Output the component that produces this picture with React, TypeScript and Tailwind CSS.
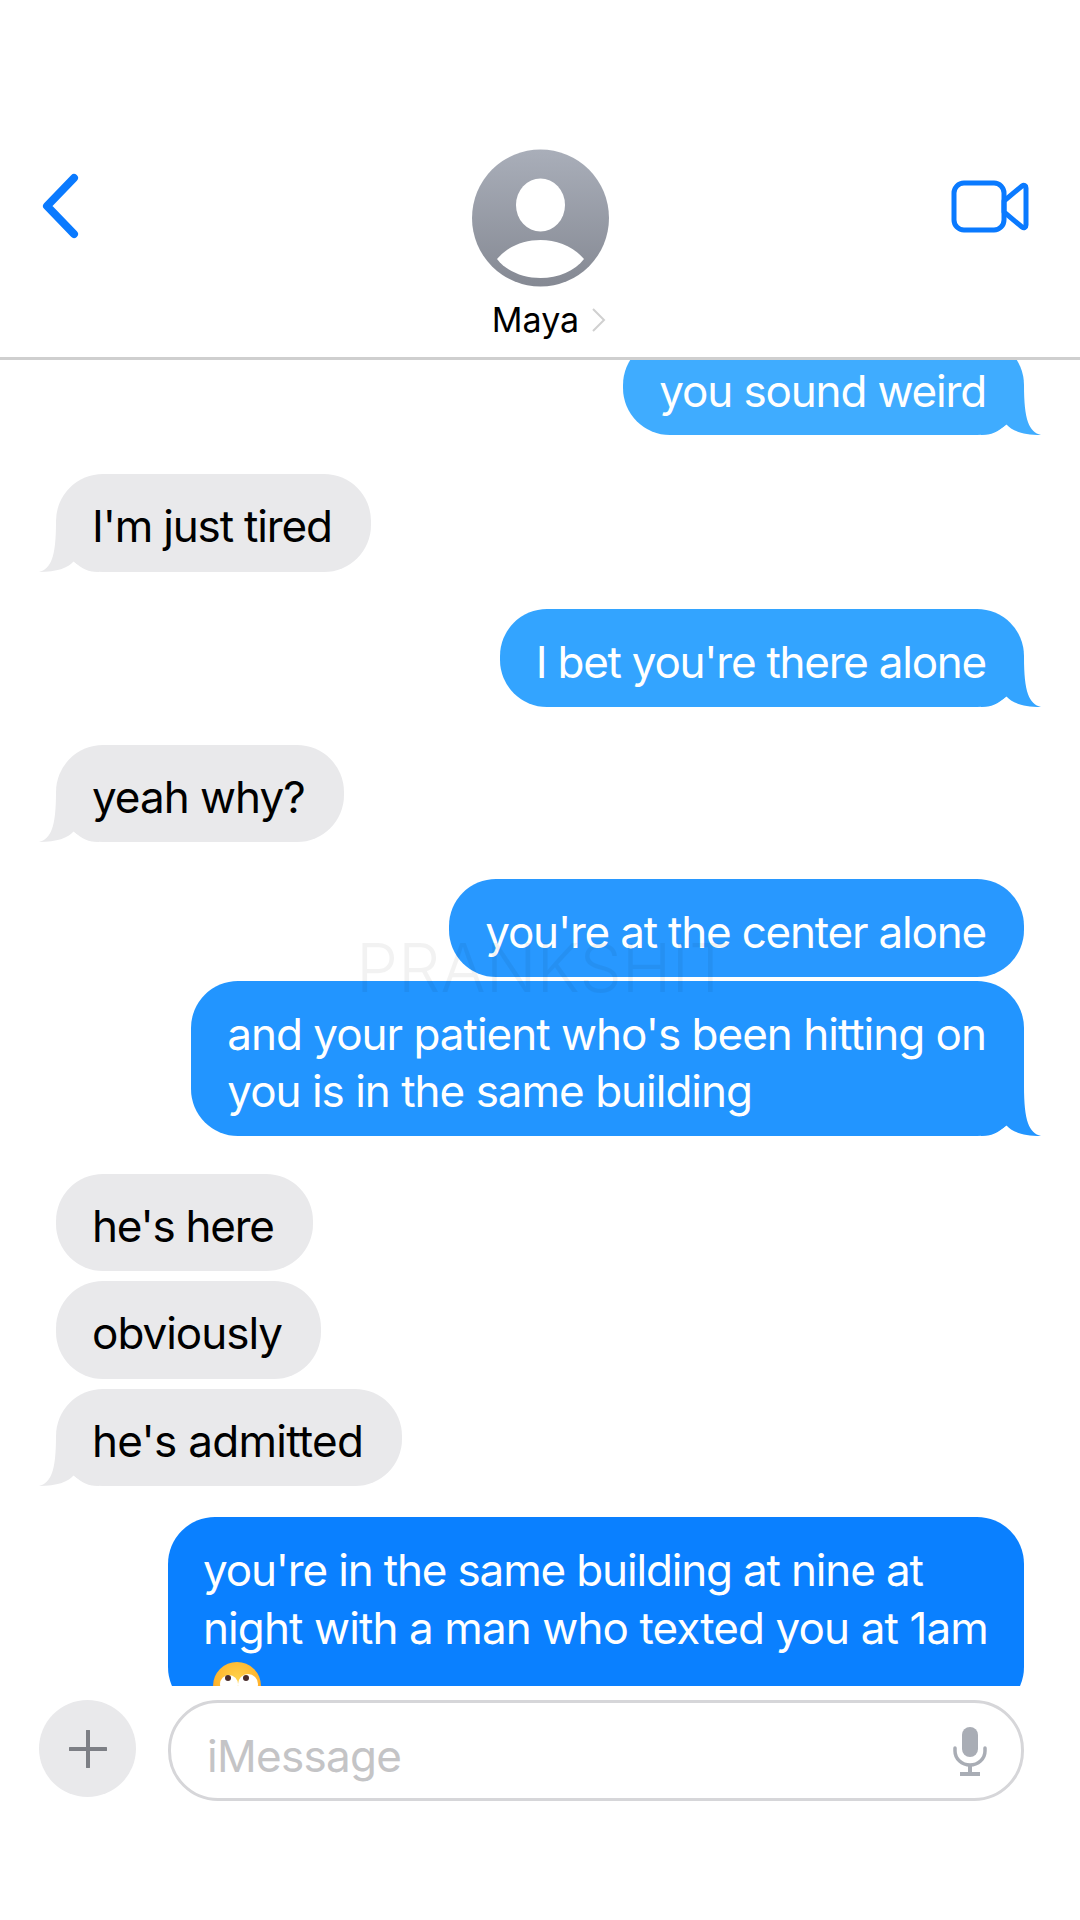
const font = "font-['Inter','Liberation_Sans',sans-serif]";

function Tail({ color, left }: { color: string; left?: boolean }) {
  return (
    <svg
      className={left ? "absolute left-[-17px] bottom-0 -scale-x-100" : "absolute right-[-17px] bottom-0"}
      width="60"
      height="50"
      viewBox="0 0 60 50"
    >
      <path d="M0 50 C10 50 18 47 25 39 C31 46 42 50 60 50 C48 47 43 35 43 0 L0 0 Z" fill={color} />
    </svg>
  );
}

function Sent({ lines, bg, tail, cls = "" }: { lines: string[]; bg: string; tail?: string; cls?: string }) {
  return (
    <div className={`relative self-end rounded-[47px] pl-9 pr-[38px] pt-[25px] pb-[15px] text-white ${bg} ${cls}`}>
      {lines.map((l) => (
        <div key={l} className="relative z-10 whitespace-nowrap">{l}</div>
      ))}
      {tail && <Tail color={tail} />}
    </div>
  );
}

function Recv({ text, tail, cls = "" }: { text: string; tail?: boolean; cls?: string }) {
  return (
    <div className={`relative self-start rounded-[47px] bg-[#e9e9eb] pl-[36px] pr-[39px] pt-6 pb-4 text-black ${cls}`}>
      <div className="relative z-10 whitespace-nowrap">{text}</div>
      {tail && <Tail color="#e9e9eb" left />}
    </div>
  );
}

function Avatar() {
  return (
    <svg width="137" height="138" viewBox="0 0 137 138">
      <defs>
        <linearGradient id="av" x1="0" y1="0" x2="0" y2="1">
          <stop offset="0" stopColor="#a9aeb9" />
          <stop offset="1" stopColor="#858993" />
        </linearGradient>
      </defs>
      <circle cx="68.5" cy="69" r="68.5" fill="url(#av)" />
      <ellipse cx="68.5" cy="56" rx="24.5" ry="26.5" fill="#fff" />
      <path d="M25 110 C36 97 52 91 68.5 91 C85 91 101 97 112 110 C103 122 86 129 68.5 129 C51 129 34 122 25 110 Z" fill="#fff" />
    </svg>
  );
}

function Emoji() {
  return (
    <svg className="absolute left-[45px] top-[145px]" width="48" height="48" viewBox="0 0 48 48">
      <defs>
        <radialGradient id="em" cx="0.5" cy="0.35" r="0.65">
          <stop offset="0" stopColor="#ffd24a" />
          <stop offset="0.7" stopColor="#ffb52e" />
          <stop offset="1" stopColor="#f58a1f" />
        </radialGradient>
      </defs>
      <circle cx="24" cy="24" r="24" fill="url(#em)" />
      <circle cx="16" cy="22" r="9" fill="#fff" />
      <circle cx="35" cy="22" r="10" fill="#fff" />
      <circle cx="15" cy="16" r="3" fill="#4a2c2a" />
      <circle cx="33" cy="16" r="3" fill="#4a2c2a" />
    </svg>
  );
}

export default function App() {
  return (
    <div className={`relative flex h-[1920px] w-[1080px] flex-col overflow-hidden bg-white ${font} text-[44px] leading-[57.5px] tracking-[-1px]`}>
      <header className="relative flex h-[360px] shrink-0 flex-col items-center border-b-[3px] border-[#cfcfcf] pt-[149px]">
        <svg className="absolute left-[38px] top-[170px]" width="46" height="72" viewBox="0 0 46 72" fill="none">
          <path d="M36 8 L9 36 L36 64" stroke="#0a7aff" strokeWidth="8" strokeLinecap="round" strokeLinejoin="round" />
        </svg>
        <svg className="absolute left-[950px] top-[179px]" width="80" height="55" viewBox="0 0 80 55" fill="none" stroke="#0a7aff" strokeWidth="5">
          <rect x="4" y="4" width="50" height="47" rx="10" />
          <path d="M54 22 L72 7 C74 5.500 76 6.500 76 9 L76 46 C76 48.500 74 49.500 72 48 L54 33 Z" strokeLinejoin="round" />
        </svg>
        <Avatar />
        <div className="mt-[11px] flex items-center pr-[7px] text-[34px] leading-[44px] tracking-normal text-black">
          <span>Maya</span>
          <svg className="ml-3 mr-[-26px]" width="16" height="26" viewBox="0 0 16 26" fill="none">
            <path d="M2 2 L13 13 L2 24" stroke="#d0d0d0" strokeWidth="2" />
          </svg>
        </div>
      </header>

      <main className="flex h-[1326px] shrink-0 flex-col overflow-hidden pl-14 pr-14">
        <Sent lines={["you sound weird"]} bg="bg-[#3facff]" tail="#3facff" cls="mt-[-22.5px] tracking-[-1.15px]" />
        <Recv text="I'm just tired" tail cls="mt-[39px] tracking-[-1.17px]" />
        <Sent lines={["I bet you're there alone"]} bg="bg-[#33a4ff]" tail="#33a4ff" cls="mt-[37.5px] tracking-[-1.25px]" />
        <Recv text="yeah why?" tail cls="mt-[38px]" />
        <Sent lines={["you're at the center alone"]} bg="bg-[#2898ff]" cls="mt-[37px] tracking-[-1.2px]" />
        <Sent lines={["and your patient who's been hitting on", "you is in the same building"]} bg="bg-[#2295ff]" tail="#2295ff" cls="mt-1" />
        <Recv text="he's here" cls="mt-[38px] tracking-[-1.25px]" />
        <Recv text="obviously" cls="mt-[10px]" />
        <Recv text="he's admitted" tail cls="mt-[10px] tracking-[-0.72px]" />
        <div className="relative mt-[31px] w-[856px] shrink-0 self-end rounded-[47px] bg-[#0a80ff] pl-[35px] pt-[25px] text-white">
          <div className="whitespace-nowrap tracking-[-1.16px]">you're in the same building at nine at</div>
          <div className="whitespace-nowrap tracking-[-0.9px]">night with a man who texted you at 1am</div>
          <div className="h-[57px]" />
          <Emoji />
        </div>
      </main>

      <footer className="mt-[14px] flex items-start gap-8 pl-[39px] pr-[56px]">
        <div className="flex h-[97px] w-[97px] shrink-0 items-center justify-center rounded-full bg-[#e9e9eb]">
          <svg width="38" height="38" viewBox="0 0 38 38">
            <path d="M19 1 V37 M1 19 H37" stroke="#7d7f85" strokeWidth="4" strokeLinecap="round" />
          </svg>
        </div>
        <div className="flex h-[101px] flex-1 items-center justify-between rounded-[50px] border-[3px] border-[#d6d6d9] pl-9 pr-[34px]">
          <span className="pt-3 tracking-[-0.7px] text-[#c4c4c6]">iMessage</span>
          <svg width="34" height="50" viewBox="0 0 34 50" fill="none">
            <rect x="9" y="1" width="16" height="30" rx="8" fill="#a9adb5" />
            <path d="M2 22 V25 C2 33 9 39 17 39 C25 39 32 33 32 25 V22" stroke="#a9adb5" strokeWidth="3.500" strokeLinecap="round" />
            <path d="M17 39 V47 M7 48 H27" stroke="#a9adb5" strokeWidth="4" />
          </svg>
        </div>
      </footer>

      <div className="pointer-events-none absolute left-[356px] top-[933px] z-20 text-[67px] font-light leading-[70px] tracking-normal text-black/5">PRANKSHIT</div>
    </div>
  );
}
